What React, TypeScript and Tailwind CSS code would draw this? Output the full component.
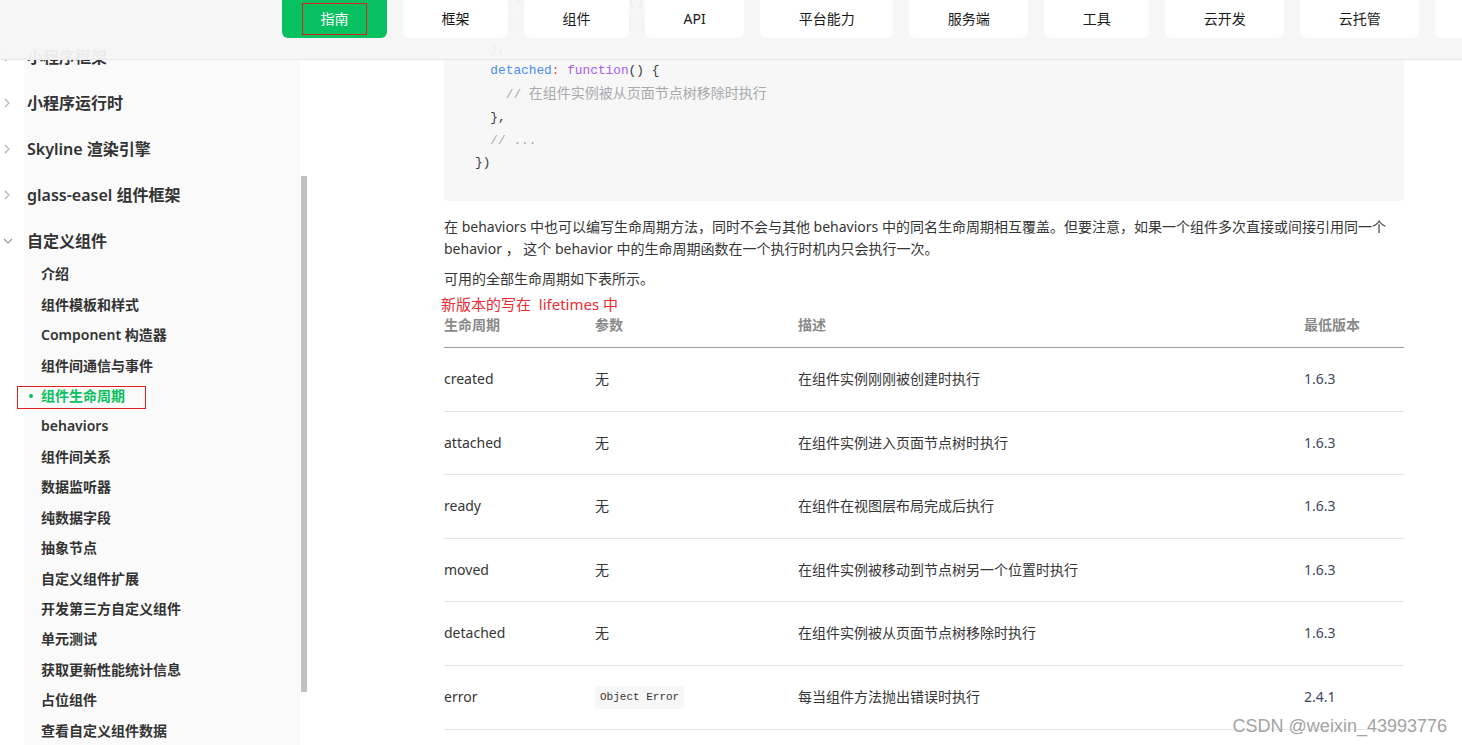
import React from "react";

const navItems = ["指南", "框架", "组件", "API", "平台能力", "服务端", "工具", "云开发", "云托管"];

const topItems = ["小程序框架", "小程序运行时", "Skyline 渲染引擎", "glass-easel 组件框架"];

const subItems = [
  "介绍",
  "组件模板和样式",
  "Component 构造器",
  "组件间通信与事件",
  "组件生命周期",
  "behaviors",
  "组件间关系",
  "数据监听器",
  "纯数据字段",
  "抽象节点",
  "自定义组件扩展",
  "开发第三方自定义组件",
  "单元测试",
  "获取更新性能统计信息",
  "占位组件",
  "查看自定义组件数据",
];

const rows: [string, string, string, string][] = [
  ["created", "无", "在组件实例刚刚被创建时执行", "1.6.3"],
  ["attached", "无", "在组件实例进入页面节点树时执行", "1.6.3"],
  ["ready", "无", "在组件在视图层布局完成后执行", "1.6.3"],
  ["moved", "无", "在组件实例被移动到节点树另一个位置时执行", "1.6.3"],
  ["detached", "无", "在组件实例被从页面节点树移除时执行", "1.6.3"],
  ["error", "Object Error", "每当组件方法抛出错误时执行", "2.4.1"],
];

function ChevronRight() {
  return (
    <svg width="6" height="10" viewBox="0 0 6 10">
      <path d="M1 1l4 4-4 4" fill="none" stroke="#b5b5b5" strokeWidth="1.2" />
    </svg>
  );
}

function ChevronDown() {
  return (
    <svg width="10" height="6" viewBox="0 0 10 6">
      <path d="M1 1l4 4 4-4" fill="none" stroke="#9a9a9a" strokeWidth="1.2" />
    </svg>
  );
}

function Key({ children }: { children: React.ReactNode }) {
  return <span className="text-[#4a8ef2]">{children}</span>;
}
function Colon() {
  return <span className="text-[#e45649]">:</span>;
}
function Fn() {
  return <span className="text-[#a95ce8]">function</span>;
}
function Comment({ text }: { text: string }) {
  return (
    <span className="text-[#a9a9ad]">
      {"// "}
      <span className="text-[14px]">{text}</span>
    </span>
  );
}

export default function App() {
  return (
    <div className="relative h-[745px] w-full overflow-hidden bg-white font-['Noto_Sans','Noto_Sans_CJK_SC',sans-serif] text-[#333]">
      <div className="flex h-full">
        {/* Sidebar */}
        <aside className="h-full w-[300px] shrink-0 bg-[linear-gradient(to_right,#ffffff_24px,#fafafa_24px)] pt-[34px]">
          {topItems.map((t) => (
            <div key={t} className="flex h-[46px] items-center">
              <div className="flex w-[27px] items-center pl-[4px]">
                <ChevronRight />
              </div>
              <span className="text-[16px] font-semibold leading-[22px] text-[#333]">{t}</span>
            </div>
          ))}
          <div className="flex h-[45px] items-center">
            <div className="flex w-[27px] items-center pl-[3px]">
              <ChevronDown />
            </div>
            <span className="text-[16px] font-semibold leading-[22px] text-[#333]">自定义组件</span>
          </div>
          <div className="-mt-[4px]">
            {subItems.map((s) => {
              const active = s === "组件生命周期";
              return (
                <div key={s} className="flex h-[30.45px] items-center pl-[41px]">
                  {active && <span className="-ml-[12px] mr-[8px] h-[4px] w-[4px] rounded-full bg-[#07c160]" />}
                  <span
                    className={
                      "text-[14px] font-semibold leading-[20px] " + (active ? "text-[#07c160]" : "text-[#333]")
                    }
                  >
                    {s}
                  </span>
                </div>
              );
            })}
          </div>
        </aside>

        {/* Scrollbar */}
        <div className="w-[8px] shrink-0 pl-px pt-[176px]">
          <div className="h-[516px] w-[6px] bg-[#c1c1c1]" />
        </div>

        {/* Main */}
        <main className="min-w-0 flex-1">
          <div className="-mt-[25px] ml-[136px] w-[960px]">
            <div className="whitespace-pre rounded-[4px] bg-[#f7f7f7] pb-[26px] pl-[31px] pt-[16px] font-['Liberation_Mono','Noto_Sans_CJK_SC',monospace] text-[12.8px] leading-[22.75px] text-[#383a42]">
              <div>
                {"  "}
                <Key>attached</Key>
                <Colon /> <Fn />
                {"() {"}
              </div>
              <div>
                {"    "}
                <Comment text="在组件实例进入页面节点树时执行" />
              </div>
              <div>{"  },"}</div>
              <div>
                {"  "}
                <Key>detached</Key>
                <Colon /> <Fn />
                {"() {"}
              </div>
              <div>
                {"    "}
                <Comment text="在组件实例被从页面节点树移除时执行" />
              </div>
              <div>{"  },"}</div>
              <div>
                {"  "}
                <span className="text-[#a9a9ad]">{"// ..."}</span>
              </div>
              <div>{"})"}</div>
            </div>

            <p className="mt-[15px] text-[14px] leading-[22px] text-[#353535]">
              在 behaviors 中也可以编写生命周期方法，同时不会与其他 behaviors 中的同名生命周期相互覆盖。但要注意，如果一个组件多次直接或间接引用同一个
              behavior ， 这个 behavior 中的生命周期函数在一个执行时机内只会执行一次。
            </p>
            <p className="mt-[8px] text-[14px] leading-[22px] text-[#353535]">可用的全部生命周期如下表所示。</p>

            <table className="mt-[13px] w-full table-fixed border-collapse text-left text-[14px]">
              <colgroup>
                <col className="w-[151px]" />
                <col className="w-[203px]" />
                <col className="w-[506px]" />
                <col className="w-[100px]" />
              </colgroup>
              <thead>
                <tr className="border-b border-[#9a9a9a]">
                  {["生命周期", "参数", "描述", "最低版本"].map((h) => (
                    <th key={h} className="pb-[11px] pt-[11px] font-semibold leading-[22px] text-[#8a8a8a]">
                      {h}
                    </th>
                  ))}
                </tr>
              </thead>
              <tbody>
                {rows.map((r) => (
                  <tr key={r[0]} className="border-b border-[#e5e5e5]">
                    <td className="py-[20px] leading-[22.5px] text-[#353535]">{r[0]}</td>
                    <td className="py-[20px] leading-[22.5px] text-[#353535]">
                      {r[1] === "Object Error" ? (
                        <code className="inline-block h-[23px] rounded-[2px] bg-[#f7f7f7] px-[5px] align-middle font-['Liberation_Mono',monospace] text-[11px] leading-[23px] text-[#333]">
                          Object Error
                        </code>
                      ) : (
                        r[1]
                      )}
                    </td>
                    <td className="py-[20px] leading-[22.5px] text-[#353535]">{r[2]}</td>
                    <td className="py-[20px] leading-[22.5px] text-[#3d4660]">{r[3]}</td>
                  </tr>
                ))}
              </tbody>
            </table>
          </div>
        </main>
      </div>

      <header className="absolute left-0 right-0 top-0 h-[60px] border-b border-[#e8e8e8] bg-[#f5f5f5]/95">
        <nav className="flex gap-[16px] pl-[282px]">
          {navItems.map((n, i) => (
            <div
              key={n}
              className={
                "flex h-[38px] shrink-0 items-center rounded-b-[6px] px-[38.5px] text-[14px] leading-[20px] " +
                (i === 0 ? "bg-[#07c160] text-white" : "bg-white text-[#1a1a1a]")
              }
            >
              {n}
            </div>
          ))}
          <div className="h-[38px] w-[60px] shrink-0 rounded-b-[6px] bg-white" />
        </nav>
      </header>

      {/* Annotations drawn over the screenshot */}
      <div className="absolute left-[302px] top-[3px] h-[32px] w-[65px] border border-[#e0201f]" />
      <div className="absolute left-[17px] top-[386px] h-[23px] w-[129px] border border-[#e0201f]" />
      <div className="absolute left-[441px] top-[294px] text-[15px] leading-[21px] text-[#ee2a33]">
        新版本的写在&nbsp;&nbsp;lifetimes 中
      </div>
      <div className="absolute bottom-[8px] right-[15px] font-['Liberation_Sans',sans-serif] text-[18px] leading-[21px] text-[#a3a3a3] [text-shadow:0_0_2px_#ffffff]">
        CSDN @weixin_43993776
      </div>
    </div>
  );
}
